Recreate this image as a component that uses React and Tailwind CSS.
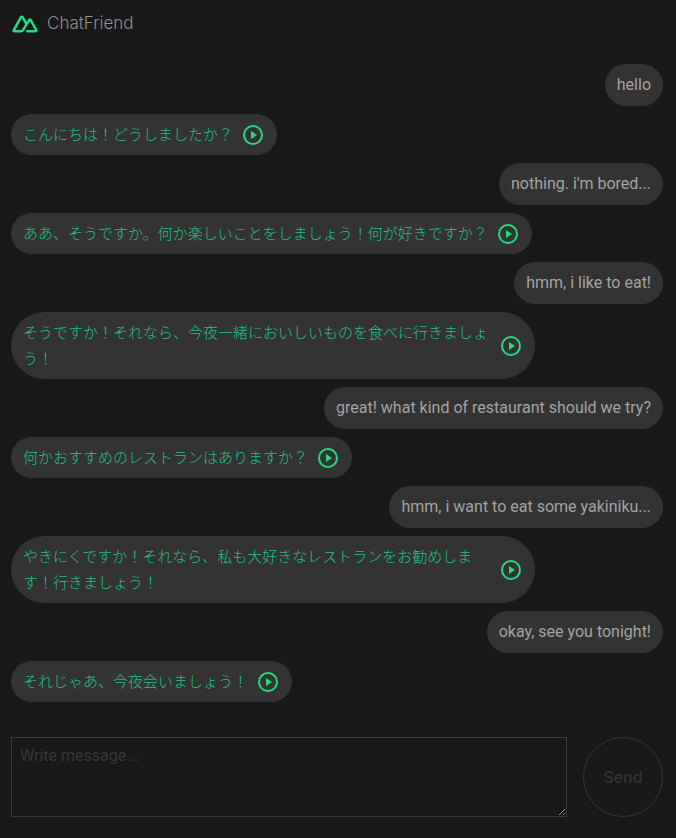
const messages = [
  { me: true, text: 'hello' },
  { text: 'こんにちは！どうしましたか？' },
  { me: true, text: "nothing. i'm bored..." },
  { text: 'ああ、そうですか。何か楽しいことをしましょう！何が好きですか？' },
  { me: true, text: 'hmm, i like to eat!' },
  { text: 'そうですか！それなら、今夜一緒においしいものを食べに行きましょう！' },
  { me: true, text: 'great! what kind of restaurant should we try?' },
  { text: '何かおすすめのレストランはありますか？' },
  { me: true, text: 'hmm, i want to eat some yakiniku...' },
  { text: 'やきにくですか！それなら、私も大好きなレストランをお勧めします！行きましょう！' },
  { me: true, text: 'okay, see you tonight!' },
  { text: 'それじゃあ、今夜会いましょう！' },
];

function Logo() {
  return (
    <svg viewBox="0 0 26 18" className="h-[18px] w-[26px]" fill="none" stroke="#23dc82" strokeWidth="2.5" strokeLinejoin="round" strokeLinecap="round" aria-hidden="true">
      <path d="M15.3 16.2H23.4Q25 16.2 24.2 14.8L18.7 5.2Q17.9 4 17.1 5.2L11 15.2Q10.2 16.2 8.8 16.2H2.6Q1.1 16.2 1.9 14.8L8.9 2.3Q9.8 1 10.7 2.3L13.9 7.8" />
    </svg>
  );
}

function PlayButton() {
  return (
    <button type="button" aria-label="Play message" className="shrink-0">
      <svg viewBox="0 0 24 24" className="size-6" aria-hidden="true">
        <circle cx="12" cy="12" r="9" fill="none" stroke="#23dc82" strokeWidth="2" />
        <path d="M10 8v8l6-4z" fill="#23dc82" />
      </svg>
    </button>
  );
}

export default function App() {
  return (
    <div className="flex min-h-screen flex-col bg-[#181818] pr-[13px] pb-[21px] pl-[11px] font-['Roboto','Noto_Sans_CJK_JP',sans-serif] text-base text-[#a3a3a3]">
      <header className="flex h-12 items-center gap-[9px] pl-px">
        <Logo />
        <h1 className="font-['Inter',sans-serif] text-[17px] font-light text-[#8f8f8f]">ChatFriend</h1>
      </header>
      <main className="mt-4 flex flex-col gap-2">
        {messages.map((m) =>
          m.me ? (
            <p key={m.text} className="self-end rounded-3xl bg-[#333333] px-3 py-2 leading-[26px]">{m.text}</p>
          ) : (
            <div key={m.text} className="flex max-w-[524px] items-center gap-2 self-start rounded-[34px] bg-[#333333] px-3 pt-2 pb-[7px] text-[#22c084]">
              <p className="text-[15px] leading-[26px] font-light">{m.text}</p>
              <PlayButton />
            </div>
          ),
        )}
      </main>
      <form className="mt-auto flex gap-4" onSubmit={(e) => e.preventDefault()}>
        <textarea aria-label="Message" placeholder="Write message..." className="h-20 min-w-0 flex-1 border border-[#3a3a3a] bg-transparent px-2 pt-[5px] pb-1 leading-[26px] placeholder:text-[#363636]" />
        <button type="submit" className="size-20 shrink-0 rounded-full border border-[#333333] font-['Inter',sans-serif] font-medium text-[#333333]">Send</button>
      </form>
    </div>
  );
}
